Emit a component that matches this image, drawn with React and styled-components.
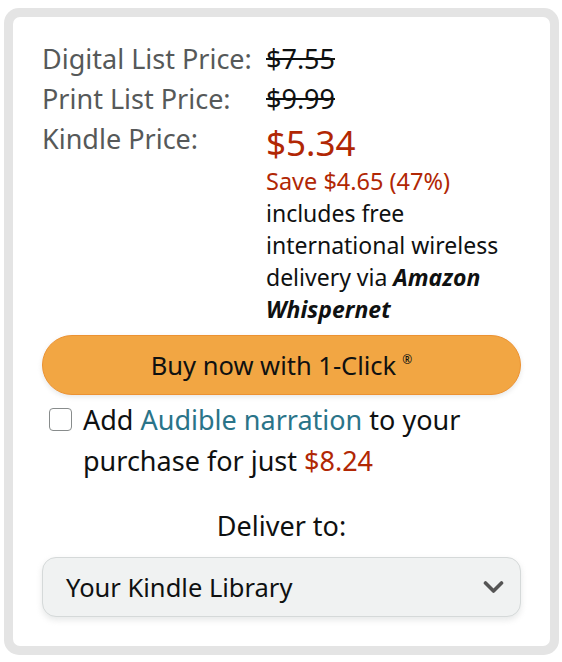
import styled, { createGlobalStyle } from "styled-components";

const GlobalStyle = createGlobalStyle`
  body {
    margin: 0;
    background: #ffffff;
    font-family: "Noto Sans", "Open Sans", Arial, sans-serif;
    color: #0f1111;
  }
`;

const Frame = styled.div`
  margin: 8px 3px 0 4px;
  padding: 9px;
  background: #e4e4e4;
  border-radius: 15px;
`;

const Card = styled.div`
  background: #ffffff;
  border-radius: 7px;
  padding: 22px 29px 29px;
  display: flex;
  flex-direction: column;
`;

const PriceGrid = styled.div`
  display: grid;
  grid-template-columns: 224px 1fr;
  align-items: start;
`;

const Label = styled.span`
  font-size: 27px;
  line-height: 40px;
  color: #565959;
`;

const Struck = styled.span`
  font-size: 27px;
  line-height: 40px;
  color: #0f1111;
  text-decoration: line-through;
`;

const PriceBlock = styled.div`
  display: flex;
  flex-direction: column;
  padding-top: 2px;
`;

const BigPrice = styled.span`
  font-size: 35px;
  line-height: 44px;
  color: #b12704;
`;

const Save = styled.span`
  font-size: 23.5px;
  line-height: 32px;
  color: #b12704;
`;

const Note = styled.span`
  font-size: 23px;
  line-height: 32px;
  color: #0f1111;

  b {
    font-weight: 700;
    font-style: italic;
  }
`;

const BuyButton = styled.button`
  margin-top: 10px;
  height: 60px;
  border-radius: 30px;
  border: 1px solid #ec9232;
  background: #f2a643;
  box-shadow: 0 2px 5px rgba(213, 217, 217, 0.6);
  font-family: inherit;
  font-size: 25.5px;
  color: #0f1111;
  display: flex;
  align-items: center;
  justify-content: center;
  cursor: pointer;

  sup {
    font-size: 12px;
    margin-left: 6px;
    position: relative;
    top: -6px;
  }
`;

const AddRow = styled.div`
  margin-top: 4px;
  display: flex;
  align-items: flex-start;
  gap: 11px;
  padding-left: 7px;
  font-size: 27px;
  line-height: 41px;
`;

const Box = styled.span`
  flex: none;
  width: 21px;
  height: 21px;
  margin-top: 9px;
  border: 1.5px solid #888c8c;
  border-radius: 4px;
  background: #ffffff;
`;

const AddText = styled.p`
  margin: 0;
`;

const Link = styled.a`
  color: #2a7489;
  text-decoration: none;
`;

const Red = styled.span`
  color: #b12704;
`;

const DeliverTitle = styled.div`
  margin-top: 25px;
  text-align: center;
  font-size: 27px;
  line-height: 40px;
`;

const Select = styled.div`
  margin-top: 11px;
  height: 60px;
  box-sizing: border-box;
  border: 1px solid #d5d9d9;
  border-radius: 14px;
  background: #f0f2f2;
  box-shadow: 0 3px 6px rgba(213, 217, 217, 0.6);
  display: flex;
  align-items: center;
  justify-content: space-between;
  padding: 0 16px 0 23px;
  font-size: 25.5px;
`;

function Chevron() {
  return (
    <svg width="21" height="14" viewBox="0 0 21 14">
      <polyline
        points="2.5,3 10.5,11 18.5,3"
        fill="none"
        stroke="#555555"
        strokeWidth="3.6"
        strokeLinecap="round"
        strokeLinejoin="round"
      />
    </svg>
  );
}

export default function App() {
  return (
    <>
      <GlobalStyle />
      <Frame>
        <Card>
          <PriceGrid>
            <Label>Digital List Price:</Label>
            <div>
              <Struck>$7.55</Struck>
            </div>
            <Label>Print List Price:</Label>
            <div>
              <Struck>$9.99</Struck>
            </div>
            <Label>Kindle Price:</Label>
            <PriceBlock>
              <BigPrice>$5.34</BigPrice>
              <Save>Save $4.65 (47%)</Save>
              <Note>
                includes free international wireless delivery via{" "}
                <b>Amazon Whispernet</b>
              </Note>
            </PriceBlock>
          </PriceGrid>
          <BuyButton>
            Buy now with 1-Click<sup>®</sup>
          </BuyButton>
          <AddRow>
            <Box />
            <AddText>
              Add <Link>Audible narration</Link> to your purchase for just{" "}
              <Red>$8.24</Red>
            </AddText>
          </AddRow>
          <DeliverTitle>Deliver to:</DeliverTitle>
          <Select>
            <span>Your Kindle Library</span>
            <Chevron />
          </Select>
        </Card>
      </Frame>
    </>
  );
}
